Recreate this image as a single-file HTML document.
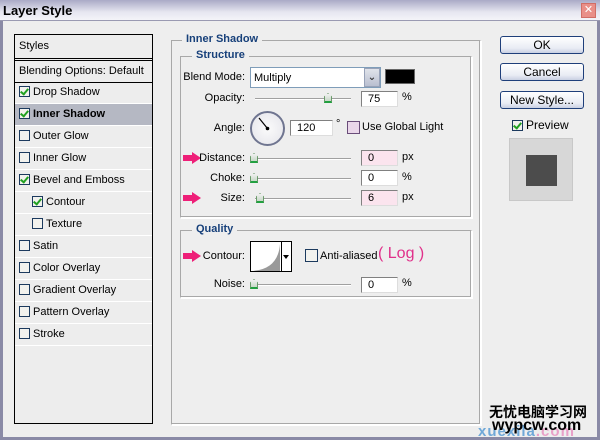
<!DOCTYPE html>
<html><head><meta charset="utf-8"><style>
*{margin:0;padding:0;box-sizing:border-box}
body{width:600px;height:440px;overflow:hidden;background:#eeeeee;font-family:"Liberation Sans","DejaVu Sans",sans-serif;font-size:11px;color:#000;position:relative}
.a{position:absolute;white-space:nowrap}
.title{left:0;top:0;width:600px;height:21px;background:linear-gradient(#a9a9c6,#e6e6f0 60%,#f4f4f8);border-bottom:1px solid #9a9ab2}
.title span{position:absolute;left:3px;top:3px;font-weight:bold;font-size:13px;color:#000}
.close{left:581px;top:3px;width:15px;height:15px;background:#e98f88;border:1px solid #d06e66;color:#fff;font-size:11px;font-weight:bold;text-align:center;line-height:13px}
.win{left:0;top:21px;width:600px;height:419px;border-left:3px solid #8a8aa6;border-right:3px solid #8a8aa6;border-bottom:3px solid #8a8aa6}
.list{left:14px;top:34px;width:139px;height:390px;border:1px solid #000;background:#ededed}
.row{position:absolute;left:0;width:137px;height:22px;border-bottom:1px solid #fff;line-height:21px;padding-left:4px;font-size:11px;white-space:nowrap}
.cb{display:inline-block;width:11px;height:11px;border:1px solid #1c3a5e;background:#f2f2ee;vertical-align:-2px;margin-right:3px;position:relative}
.cb.k::after{content:"";position:absolute;left:2px;top:0px;width:3px;height:6px;border:solid #21a121;border-width:0 2px 2px 0;transform:rotate(40deg)}
.fs{border:1px solid #a8a8a8;border-right-color:#fff;border-bottom-color:#fff;box-shadow:inset -1px -1px 0 #a8a8a8,1px 1px 0 #fff}
.leg{background:#eeeeee;color:#17407a;font-weight:bold;font-size:11px;padding:0 4px}
.lbl{text-align:right;width:90px}
.inp{background:#fff;border:1px solid #7f9db9;border-color:#808080 #ddd #ddd #808080;height:16px;padding-left:6px;line-height:15px;font-size:11px}
.pink{background:#fbe4ee}
.track{height:2px;border-top:1px solid #a0a0a0;border-bottom:1px solid #fff;width:96px}
.th{width:8px;height:10px;background:linear-gradient(#f0f0f0,#c8d8c8);border:1px solid #6a9a6a;border-bottom:2px solid #22a040;clip-path:polygon(50% 0,100% 35%,100% 100%,0 100%,0 35%)}
.btn{left:500px;width:84px;height:18px;border:1px solid #1f3f7a;border-radius:3px;background:linear-gradient(#fff,#e9ecf4 70%,#c9d0e2);text-align:center;line-height:16px;font-size:12px}
.arrow{width:18px;height:12px}
</style></head><body>
<div class="a title"><span>Layer Style</span></div>
<div class="a close">✕</div>
<div class="a win"></div>

<div class="a list">
<div class="row" style="top:0;height:24px;border-bottom:1px solid #000;line-height:22px">Styles</div>
<div class="row" style="top:25px;height:23px;border-bottom:1px solid #000;border-top:1px solid #000;line-height:20px">Blending Options: Default</div>
<div class="row" style="top:47px"><span class="cb k"></span>Drop Shadow</div>
<div class="row" style="top:69px;background:#b5b8c3;font-weight:bold"><span class="cb k"></span>Inner Shadow</div>
<div class="row" style="top:91px"><span class="cb"></span>Outer Glow</div>
<div class="row" style="top:113px"><span class="cb"></span>Inner Glow</div>
<div class="row" style="top:135px"><span class="cb k"></span>Bevel and Emboss</div>
<div class="row" style="top:157px;padding-left:17px"><span class="cb k"></span>Contour</div>
<div class="row" style="top:179px;padding-left:17px"><span class="cb"></span>Texture</div>
<div class="row" style="top:201px"><span class="cb"></span>Satin</div>
<div class="row" style="top:223px"><span class="cb"></span>Color Overlay</div>
<div class="row" style="top:245px"><span class="cb"></span>Gradient Overlay</div>
<div class="row" style="top:267px"><span class="cb"></span>Pattern Overlay</div>
<div class="row" style="top:289px"><span class="cb"></span>Stroke</div>
</div>

<div class="a fs" style="left:171px;top:40px;width:310px;height:385px"></div>
<div class="a leg" style="left:182px;top:33px">Inner Shadow</div>
<div class="a fs" style="left:180px;top:56px;width:292px;height:162px"></div>
<div class="a leg" style="left:192px;top:49px">Structure</div>
<div class="a fs" style="left:180px;top:230px;width:292px;height:68px"></div>
<div class="a leg" style="left:192px;top:223px">Quality</div>

<div class="a lbl" style="left:155px;top:71px">Blend Mode:</div>
<div class="a" style="left:250px;top:67px;width:131px;height:21px;background:#fff;border:1px solid #7f9db9;padding:4px 0 0 3px">Multiply</div>
<div class="a" style="left:364px;top:68px;width:16px;height:19px;background:linear-gradient(#e0e3ea,#b9bfd0);border:1px solid #98a2b8;text-align:center;font-size:10px;line-height:18px;font-weight:bold;color:#333">⌄</div>
<div class="a" style="left:385px;top:69px;width:30px;height:15px;background:#000;border:1px solid #666"></div>

<div class="a lbl" style="left:155px;top:92px">Opacity:</div>
<div class="a track" style="left:255px;top:98px"></div>
<div class="a th" style="left:324px;top:93px"></div>
<div class="a inp" style="left:361px;top:91px;width:37px">75</div>
<div class="a" style="left:402px;top:91px">%</div>

<div class="a lbl" style="left:155px;top:122px">Angle:</div>
<div class="a" style="left:250px;top:111px;width:35px;height:35px;border-radius:50%;border:2px solid #6f7590;background:radial-gradient(#fbfbfb,#e4e4ea)"></div>
<svg class="a" style="left:250px;top:111px" width="35" height="35"><line x1="9" y1="7" x2="17.5" y2="17.5" stroke="#000" stroke-width="1.2"/><circle cx="17.5" cy="17.5" r="1.8"/></svg>
<div class="a inp" style="left:290px;top:120px;width:43px">120</div>
<div class="a" style="left:336px;top:118px">°</div>
<div class="a" style="left:347px;top:121px;width:13px;height:13px;border:1px solid #6a4d7a;background:#ead7ea"></div>
<div class="a" style="left:362px;top:121px">Use Global Light</div>

<svg class="a arrow" style="left:183px;top:152px" viewBox="0 0 18 12"><path d="M0 3h9V0l9 6-9 6V9H0z" fill="#ee1f78"/></svg>
<div class="a lbl" style="left:155px;top:152px">Distance:</div>
<div class="a track" style="left:255px;top:158px"></div>
<div class="a th" style="left:250px;top:153px"></div>
<div class="a inp pink" style="left:361px;top:150px;width:37px">0</div>
<div class="a" style="left:402px;top:151px">px</div>

<div class="a lbl" style="left:155px;top:172px">Choke:</div>
<div class="a track" style="left:255px;top:178px"></div>
<div class="a th" style="left:250px;top:173px"></div>
<div class="a inp" style="left:361px;top:170px;width:37px">0</div>
<div class="a" style="left:402px;top:171px">%</div>

<svg class="a arrow" style="left:183px;top:192px" viewBox="0 0 18 12"><path d="M0 3h9V0l9 6-9 6V9H0z" fill="#ee1f78"/></svg>
<div class="a lbl" style="left:155px;top:192px">Size:</div>
<div class="a track" style="left:255px;top:198px"></div>
<div class="a th" style="left:256px;top:193px"></div>
<div class="a inp pink" style="left:361px;top:190px;width:37px">6</div>
<div class="a" style="left:402px;top:191px">px</div>

<svg class="a arrow" style="left:183px;top:250px" viewBox="0 0 18 12"><path d="M0 3h9V0l9 6-9 6V9H0z" fill="#ee1f78"/></svg>
<div class="a lbl" style="left:155px;top:250px">Contour:</div>
<div class="a" style="left:250px;top:241px;width:42px;height:31px;border:1px solid #000;background:#fff"></div>
<svg class="a" style="left:251px;top:242px" width="30" height="29"><path d="M0 29 Q27 28 29 2 L29 29Z" fill="#9a9a9a"/></svg>
<div class="a" style="left:281px;top:241px;width:1px;height:31px;background:#000"></div>
<div class="a" style="left:283px;top:255px;width:0;height:0;border-left:3px solid transparent;border-right:3px solid transparent;border-top:4px solid #000"></div>
<div class="a" style="left:305px;top:249px;width:13px;height:13px;border:1px solid #1c3a5e;background:#f2f2ee"></div>
<div class="a" style="left:320px;top:250px">Anti-aliased</div>
<div class="a" style="left:378px;top:245px;color:#e0308a;font-size:16px">( Log )</div>

<div class="a lbl" style="left:155px;top:278px">Noise:</div>
<div class="a track" style="left:255px;top:284px"></div>
<div class="a th" style="left:250px;top:279px"></div>
<div class="a inp" style="left:361px;top:277px;width:37px">0</div>
<div class="a" style="left:402px;top:277px">%</div>

<div class="a btn" style="top:36px">OK</div>
<div class="a btn" style="top:63px">Cancel</div>
<div class="a btn" style="top:91px">New Style...</div>
<div class="a" style="left:512px;top:118px;font-size:12px"><span class="cb k"></span>Preview</div>
<div class="a" style="left:509px;top:138px;width:64px;height:63px;background:#d7d7d7;border:1px solid #c8c8c8"></div>
<div class="a" style="left:526px;top:155px;width:31px;height:31px;background:#4c4c4c"></div>

<div class="a" style="left:478px;top:423px;font-size:15px;font-weight:bold;color:#6fa8d8;letter-spacing:1px">xue<span style="color:#6fa8d8">xila</span><span style="color:#e8a0c8">.com</span></div>
<div class="a" style="left:489px;top:402px;font-size:14px;font-weight:bold;font-family:'Liberation Sans','Noto Sans CJK SC',sans-serif;color:#000">无忧电脑学习网</div>
<div class="a" style="left:492px;top:417px;font-size:16px;font-weight:bold;color:#000">wypcw.com</div>
</body></html>
